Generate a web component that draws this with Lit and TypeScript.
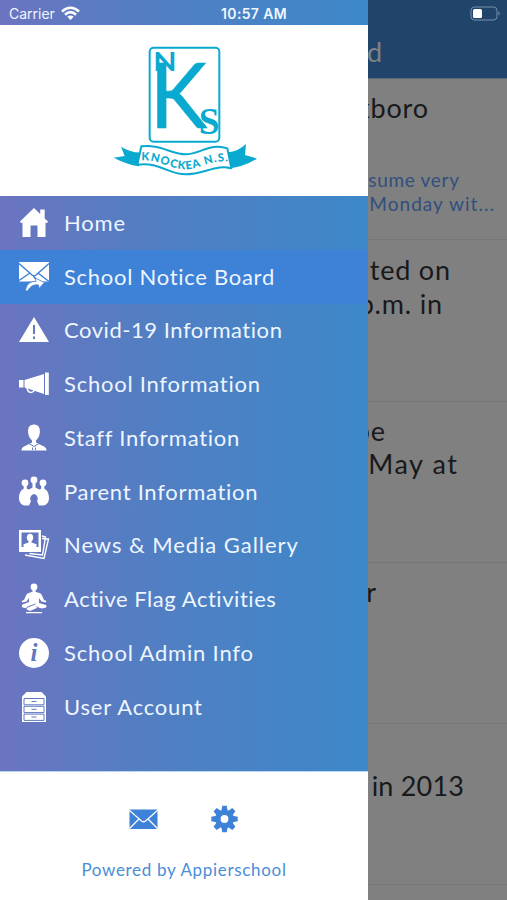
import { LitElement, html, svg, css } from "lit";
import { customElement } from "lit/decorators.js";

const icons: Record<string, unknown> = {
  home: svg`<path d="M17 2 3 15.500l1.200 1.800L5.500 16.500V31h8V19.500h7V31h8V16.500l1.500.8 1-1.800-3.300-3V3.500h-4.500V8z"/>`,
  mail: svg`<path d="M2 2h30v19.500H2z"/><path class="cut" d="M2 3.500 15 15q2 1.500 4 0L32 3.500M2 20.500 13 13M21 13l11 8.500M16.500 16.500 24 24"/><path class="edge" d="M8.500 31c.5-6 4-10 10.500-9.500l-1-3.500 9.500 4.500-5.500 6-.5-3.500c-5-1-8.500 1.500-11 6z"/>`,
  warn: svg`<path d="M17 4 32 29H2z"/><path class="cut w2" d="M17 12v9M17 23.500v2.500"/>`,
  horn: svg`<path d="M28 5.500h3.800v22.500H28zM7.500 13 27 7v20L7.500 20.500zM2 13h4.500v7.500H2z"/><path class="line" d="M10 21c1 5.500 6 5.500 7.500 2"/>`,
  person: svg`<path d="M17 3.500c5 0 6.300 4 5.800 8.500-.5 4-2.500 6-3.800 7.500v2L26 25c2.500 1 3.500 2.500 3.500 4.500h-25C4.500 27.500 5.500 26 8 25l7-3.500v-2c-1.300-1.500-3.300-3.500-3.800-7.500C10.700 7.500 12 3.500 17 3.500z"/><path class="cut" d="m12 22.500 5 3 5-3M15.500 26.500v2.500M18.500 26.500v2.500"/>`,
  group: svg`<circle cx="8" cy="8" r="3.400"/><circle cx="17" cy="5" r="3.400"/><circle cx="26" cy="8" r="3.400"/><path d="M7 10h2.500l.5 4 2 .5 3.500-2V8h3v4.500l3.500 2 2-.5.500-4H27l.5 4c3 1 4.500 5 4.500 9 0 4-2 7-6 7.500h-4L20 26c1.500-2 1-6-3-7-4 1-4.500 5-3 7l-2 4.500H8c-4-.5-6-3.500-6-7.500 0-4 1.500-8 4.500-9z"/>`,
  gallery: svg`<path class="line" d="M25 10.500 31.500 11 27 30.500 8 27M25 8l3.500 1L25.500 27l-13-1.500"/><path d="M2 2h22v22H2z"/><path class="hole" d="M4.500 4.500h17v14.500h-17z"/><ellipse cx="13" cy="9.500" rx="3.200" ry="3.800"/><path d="M11.500 12h3v2.500l5 1.700v2.800h-13v-2.800l5-1.700z"/>`,
  yoga: svg`<circle cx="17" cy="5" r="3.400"/><path d="M15.500 7.500h3v2.200l4.500 1.500q1.300.6 2 2.300l2 4.500 2.500 1-1 1.500-4-1-2.500-3.500v5l7 2q1.200 1 0 2.500l-4 1-4-1-8 3.500-3.500-1.500 1-1-5-1q-1.500-2 0-3l6.500-2.500V16L9.500 19.500l-4 1-1-1.500 2.500-1 2-4.500q.7-1.700 2-2.300l4.500-1.500zM9 30h16v1.200H9z"/><path class="cut" d="m9.500 25.500 9-3.500M21.500 25.500l-2-.7"/>`,
  info: svg`<circle cx="17" cy="17" r="15"/><text class="i" x="17" y="25" text-anchor="middle">i</text>`,
  cabinet: svg`<path d="M9.500 2h15L29 6.500V32H5V6.500z"/><path class="cut" d="M7 8.500h20v6.300H7zM7 16.300h20v6.300H7zM7 24.100h20v6.300H7zM14.500 11.500h5M14.500 19.300h5M14.500 27h5"/>`,
};

const menu: [string, string, number][] = [
  ["home", "Home", 0.8],
  ["mail", "School Notice Board", 0.72],
  ["warn", "Covid-19 Information", 0.54],
  ["horn", "School Information", 0.76],
  ["person", "Staff Information", 0.74],
  ["group", "Parent Information", 0.72],
  ["gallery", "News & Media Gallery", 0.95],
  ["yoga", "Active Flag Activities", 0.54],
  ["info", "School Admin Info", 0.82],
  ["cabinet", "User Account", 0.8],
];

@customElement("side-drawer")
class SideDrawer extends LitElement {
  static styles = css`
    :host { display: flex; flex-direction: column; width: 368px; height: 900px; background: linear-gradient(90deg, #6c74c0, #557dc2 34%, #3c88c9); }
    .status { height: 25px; flex: none; }
    .brand { height: 171px; flex: none; background: #fff; }
    .logo { display: block; margin: 0 0 0 100px; padding-top: 10px; fill: #0aa9cf; }
    .frame { fill: none; stroke: #0aa9cf; stroke-width: 6; }
    .ribbon { fill: #fff; stroke: #0aa9cf; stroke-width: 6; stroke-linejoin: round; }
    .k { font: 400 274px "Lato", sans-serif; stroke: #0aa9cf; stroke-width: 2; }
    .n { font: 700 80px "Lato", sans-serif; }
    .s { font: 700 112px "Liberation Serif", serif; }
    .motto { font: 900 34px "Lato", sans-serif; }
    .menu { flex: 1; display: flex; flex-direction: column; }
    .item { height: 53.75px; flex: none; display: flex; align-items: center; padding-left: 17px; color: #edf5ff; font: 400 22px/30px "Lato", sans-serif; white-space: nowrap; }
    .item.on { background: #3d82d6; }
    .label { margin-left: 13px; }
    .icon { width: 34px; height: 34px; fill: #fff; flex: none; }
    .cut { fill: none; stroke: #6079c0; stroke-width: 1; }
    .on .cut { stroke: #3d82d6; stroke-width: 1.5; }
    .edge { stroke: #3d82d6; stroke-width: .8; }
    .w2 { stroke-width: 2; }
    .line { fill: none; stroke: #fff; stroke-width: 1.4; }
    .hole { fill: #6376c0; }
    .i { font: italic 700 25px "Liberation Serif", serif; fill: #6078c0; }
    .foot { height: 128px; flex: none; background: #fff; border-top: 1px solid #b8d5ef; display: flex; flex-direction: column; align-items: center; color: #4a8dd8; }
    .tools { display: flex; align-items: center; gap: 52px; margin-top: 33px; height: 28px; }
    .tool { width: 29px; height: 28px; fill: #3d82d6; }
    .fold { fill: none; stroke: #fff; stroke-width: 1.3; }
    .powered { margin-top: 27px; font: 400 17px/20px "Lato", sans-serif; letter-spacing: .68px; white-space: nowrap; }
  `;
  render() {
    return html`
      <div class="status"></div>
      <div class="brand">
        <svg class="logo" width="170" height="150" viewBox="0 0 510 450">
          <rect class="frame" x="149" y="38" width="209" height="282" rx="12"/>
          <text class="k" x="149" y="279" textLength="172" lengthAdjust="spacingAndGlyphs">K</text>
          <text class="n" x="160" y="109" textLength="70" lengthAdjust="spacingAndGlyphs">N</text>
          <text class="s" x="296" y="296">S</text>
          <path d="M128 352Q95 355 63 335l11 28-33 5q38 20 76 26zM385 352q28-2 53-25l-3 33 36 11q-42 26-90 30z"/>
          <path class="ribbon" d="M124 334c50-8 94 24 134 24s75-36 124-18l12 60c-40-14-85 18-137 18-55 0-77-38-145-29z"/>
          <path id="wave" fill="none" d="M124 376c50-3 90 27 132 27s75-30 135-23"/>
          <text class="motto"><textPath href="#wave" textLength="266">KNOCKEA N.S.</textPath></text>
        </svg>
      </div>
      <div class="menu">
        ${menu.map(([icon, label, gap], i) => html`<div class="item ${i === 1 ? "on" : ""}">
          <svg class="icon" viewBox="0 0 34 34">${icons[icon]}</svg>
          <span class="label" style="letter-spacing:${gap}px">${label}</span>
        </div>`)}
      </div>
      <div class="foot">
        <div class="tools">
          <svg class="tool" viewBox="0 0 29 28"><path d="M.5 4.500h28v19.500H.5z"/><path class="fold" d="m0 5 12.500 11q2 1.500 4 0L29 5M.5 23.500 10 14M28.500 23.500 19 14"/></svg>
          <svg class="tool" viewBox="-14.500 -14 29 28">
            ${[0, 45, 90, 135].map((a) => svg`<path transform="rotate(${a})" d="M-2.200-13.200h4.400l1 5.200v16l-1 5.200h-4.400l-1-5.200v-16z"/>`)}
            <circle r="9.300"/><circle r="3.900" fill="#fff"/>
          </svg>
        </div>
        <div class="powered">Powered by Appierschool</div>
      </div>`;
  }
}

type Line = { text: string; end: number; small?: boolean; gap: number };
const notices: { top: number; lines: Line[] }[] = [
  { top: 12, lines: [{ text: "Roxboro", end: 428, gap: 0.8 }, { text: "resume very", end: 459, small: true, gap: 0.7 }, { text: "Monday wit...", end: 494, small: true, gap: 1.05 }] },
  { top: 13, lines: [{ text: "ted on", end: 450, gap: 0.8 }, { text: "p.m. in", end: 442, gap: 0.8 }] },
  { top: 12, lines: [{ text: "be", end: 385, gap: 0.8 }, { text: "May at", end: 457, gap: 1.6 }] },
  { top: 12, lines: [{ text: "r", end: 376, gap: 0.8 }] },
  { top: 45, lines: [{ text: "in 2013", end: 464, gap: 0.2 }] },
];

@customElement("notice-board")
class NoticeBoard extends LitElement {
  static styles = css`
    :host { display: block; width: 507px; height: 900px; background: #808080; overflow: hidden; }
    .bar { height: 79px; box-sizing: border-box; padding-top: 35px; background: #21446b; border-bottom: 1px solid #5a6a7d; }
    .card { height: 161.250px; box-sizing: border-box; border-bottom: 1px solid #767676; }
    .line { display: flex; justify-content: flex-end; white-space: nowrap; font: 400 27px/33.500px "Lato", sans-serif; letter-spacing: .8px; color: #18191b; }
    .title { width: 383px; color: #808388; }
    .small { font-size: 19px; line-height: 24.500px; color: #314f7e; }
    .line:not(.small) + .small { margin-top: 43px; }
  `;
  render() {
    return html`<div class="bar"><div class="line title">Notice Board</div></div>
      ${notices.map((n) => html`<div class="card" style="padding-top:${n.top}px">
        ${n.lines.map((l) => html`<div class="line ${l.small ? "small" : ""}" style="width:${l.end + l.gap}px;letter-spacing:${l.gap}px">${l.text}</div>`)}
      </div>`)}`;
  }
}

@customElement("app-root")
class AppRoot extends LitElement {
  static styles = css`
    :host { display: block; position: relative; width: 507px; height: 900px; overflow: hidden; }
    .drawer { position: absolute; left: 0; top: 0; }
    .status { position: absolute; left: 0; top: 0; width: 507px; height: 27px; display: grid; grid-template-columns: 1fr auto 1fr; align-items: center; box-sizing: border-box; padding: 0 6px 0 9px; color: #f0f6ff; font: 400 14px/27px "Inter", sans-serif; }
    .left { display: flex; align-items: center; gap: 6px; }
    .time { font-weight: 600; letter-spacing: .35px; margin-right: 2px; }
    .battery { justify-self: end; }
  `;
  render() {
    return html`<notice-board></notice-board>
      <side-drawer class="drawer"></side-drawer>
      <div class="status">
        <div class="left"><span>Carrier</span>
          <svg width="19" height="15" viewBox="0 0 19 15" fill="none" stroke="#fff" stroke-width="2.600"><path d="M1 5.500q8.500-7.500 17 0M4 8.700q5.500-5 11 0"/><path fill="#fff" stroke="none" d="M6.300 10.800q3.200-2.600 6.400 0L9.500 14z"/></svg>
        </div>
        <div class="time">10:57 AM</div>
        <svg class="battery" width="31" height="15" viewBox="0 0 31 15"><rect x="1" y="1" width="26" height="13" rx="3.500" fill="none" stroke="#7890a9"/><path d="M28.500 5.500q2.500 2 0 4z" fill="#7890a9"/><rect x="3" y="3" width="9" height="9" rx="1.500" fill="#fff"/></svg>
      </div>`;
  }
}
